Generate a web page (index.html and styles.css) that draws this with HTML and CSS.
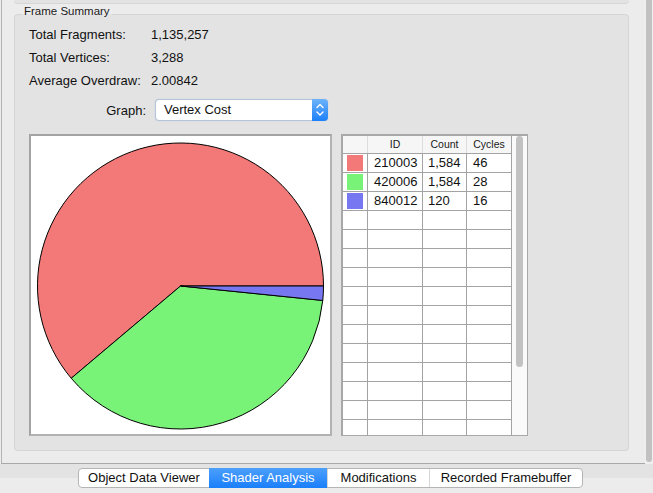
FILE: index.html
```html
<!DOCTYPE html>
<html>
<head>
<meta charset="utf-8">
<title>Frame Summary</title>
<link rel="stylesheet" href="styles.css">
</head>
<body>
<div class="top">
  <div class="pane">
    <div class="prev-group"></div>
    <fieldset class="group">
      <legend class="group-title">Frame Summary</legend>
      <div class="stats">
        <div class="stat-label">Total Fragments:</div><div class="stat-value">1,135,257</div>
        <div class="stat-label">Total Vertices:</div><div class="stat-value">3,288</div>
        <div class="stat-label">Average Overdraw:</div><div class="stat-value">2.00842</div>
      </div>
      <div class="graph-row">
        <div class="graph-label">Graph:</div>
        <div class="select">
          <span class="select-text">Vertex Cost</span>
          <span class="stepper">
            <svg width="16" height="22" viewBox="0 0 16 22">
              <path d="M5 8.5 L8 5.5 L11 8.5" fill="none" stroke="#fff" stroke-width="1.4" stroke-linecap="round" stroke-linejoin="round"/>
              <path d="M5 13 L8 16 L11 13" fill="none" stroke="#fff" stroke-width="1.4" stroke-linecap="round" stroke-linejoin="round"/>
            </svg>
          </span>
        </div>
      </div>
      <div class="chart-row">
        <div class="chart">
          <svg width="299" height="298" viewBox="0 0 299 298">
            <path d="M149.5 150 L292.5 150 A143 143 0 1 0 40.24 242.26 Z" fill="#f27977" stroke="#000" stroke-width="1"/>
            <path d="M149.5 150 L40.24 242.26 A143 143 0 0 0 291.77 164.46 Z" fill="#78f277" stroke="#000" stroke-width="1"/>
            <path d="M149.5 150 L291.77 164.46 A143 143 0 0 0 292.5 150 Z" fill="#7877f2" stroke="#000" stroke-width="1"/>
          </svg>
        </div>
        <div class="table">
          <div class="table-main">
            <div class="thead">
              <div class="th"></div>
              <div class="th">ID</div>
              <div class="th">Count</div>
              <div class="th">Cycles</div>
            </div>
            <div class="tbody">
              <div class="tr"><div class="td td-swatch"><span class="swatch swatch-red"></span></div><div class="td td-id">210003</div><div class="td td-count">1,584</div><div class="td td-cycles">46</div></div>
              <div class="tr"><div class="td td-swatch"><span class="swatch swatch-green"></span></div><div class="td td-id">420006</div><div class="td td-count">1,584</div><div class="td td-cycles">28</div></div>
              <div class="tr"><div class="td td-swatch"><span class="swatch swatch-blue"></span></div><div class="td td-id">840012</div><div class="td td-count">120</div><div class="td td-cycles">16</div></div>
              <div class="tr"><div class="td"></div><div class="td"></div><div class="td"></div><div class="td"></div></div>
              <div class="tr"><div class="td"></div><div class="td"></div><div class="td"></div><div class="td"></div></div>
              <div class="tr"><div class="td"></div><div class="td"></div><div class="td"></div><div class="td"></div></div>
              <div class="tr"><div class="td"></div><div class="td"></div><div class="td"></div><div class="td"></div></div>
              <div class="tr"><div class="td"></div><div class="td"></div><div class="td"></div><div class="td"></div></div>
              <div class="tr"><div class="td"></div><div class="td"></div><div class="td"></div><div class="td"></div></div>
              <div class="tr"><div class="td"></div><div class="td"></div><div class="td"></div><div class="td"></div></div>
              <div class="tr"><div class="td"></div><div class="td"></div><div class="td"></div><div class="td"></div></div>
              <div class="tr"><div class="td"></div><div class="td"></div><div class="td"></div><div class="td"></div></div>
              <div class="tr"><div class="td"></div><div class="td"></div><div class="td"></div><div class="td"></div></div>
              <div class="tr"><div class="td"></div><div class="td"></div><div class="td"></div><div class="td"></div></div>
              <div class="tr"><div class="td"></div><div class="td"></div><div class="td"></div><div class="td"></div></div>
            </div>
          </div>
          <div class="table-scroll"><div class="table-thumb"></div></div>
        </div>
      </div>
    </fieldset>
  </div>
  <div class="vscroll"><div class="vthumb"></div></div>
</div>
<div class="tabbar">
  <div class="tabs">
    <div class="tab tab-odv">Object Data Viewer</div>
    <div class="tab tab-sa tab-selected">Shader Analysis</div>
    <div class="tab tab-mod">Modifications</div>
    <div class="tab tab-rf">Recorded Framebuffer</div>
  </div>
</div>
</body>
</html>
```

FILE: styles.css
```css
* { box-sizing: border-box; }
html, body { margin: 0; padding: 0; }
body {
  width: 653px;
  height: 493px;
  overflow: hidden;
  background: #ececec;
  font-family: "Liberation Sans", Arial, Helvetica, sans-serif;
  font-size: 13px;
  color: #111;
}

.top { display: flex; height: 464px; }

.pane {
  margin-left: 1px;
  width: 644px;
  height: 464px;
  border-left: 1px solid #b3b3b3;
  border-bottom: 1px solid #a9a9a9;
  padding-left: 12px;
}

.prev-group {
  width: 615px;
  height: 4px;
  background: #e3e3e3;
  border-bottom: 1px solid #d6d6d6;
  border-radius: 0 0 4px 4px;
}

.group {
  margin: 0;
  width: 615px;
  min-width: 0;
  padding: 0 14px 14px 14px;
  border: 1px solid #d5d5d5;
  border-radius: 4px;
  background: #e3e3e3;
}

.group-title {
  font-size: 11.5px;
  line-height: 14px;
  padding: 0 2px 7px;
  margin-left: -7px;
  color: #1a1a1a;
}

.stats {
  display: grid;
  grid-template-columns: 122px auto;
  line-height: 23px;
  margin-top: -2px;
}

.graph-row {
  display: flex;
  align-items: center;
  height: 22px;
  margin-top: 7px;
}
.graph-label { width: 117px; text-align: right; }
.select {
  margin-left: 9px;
  width: 173px;
  height: 22px;
  display: flex;
  align-items: center;
  background: #fff;
  border: 1px solid #b4c4da;
  border-radius: 4px;
  box-shadow: 0 0 1px rgba(80, 130, 200, 0.35);
}
.select-text { padding-left: 8px; line-height: 20px; }
.stepper {
  margin: -1px -1px -1px auto;
  width: 16px;
  height: 22px;
  display: flex;
  border-radius: 0 4px 4px 0;
  background: linear-gradient(#6db3fb, #1c80fa);
}

.chart-row {
  display: flex;
  gap: 9px;
  margin-top: 13px;
}

.chart {
  width: 303px;
  height: 302px;
  background: #fff;
  border-style: solid;
  border-width: 2px;
  border-color: #a3a3a3 #b2b2b2 #b2b2b2 #a3a3a3;
}
.chart svg { display: block; }

.table {
  width: 187px;
  height: 302px;
  display: flex;
  background: #fff;
  border-style: solid;
  border-color: #a8a8a8;
  border-width: 2px 1px 1px 2px;
}
.table-main { width: 169px; height: 299px; overflow: hidden; }
.thead, .tr {
  display: grid;
  grid-template-columns: 25px 55px 44px 45px;
}
.thead {
  height: 18px;
  background: #f6f6f6;
  border-bottom: 1px solid #a3a3a3;
}
.th {
  font-size: 10.5px;
  line-height: 17px;
  text-align: center;
  color: #1a1a1a;
  border-right: 1px solid #dcdcdc;
}
.th:last-child { border-right-color: #a3a3a3; }
.tr { height: 19px; border-bottom: 1px solid #a3a3a3; }
.td {
  border-right: 1px solid #a3a3a3;
  line-height: 18px;
  font-size: 13px;
  white-space: nowrap;
}
.td-id { padding-left: 6px; }
.td-count { padding-left: 5px; }
.td-cycles { padding-left: 6px; }
.td-swatch { display: flex; align-items: center; padding-left: 4px; }
.swatch { display: block; width: 16px; height: 16px; }
.swatch-red { background: #f27977; }
.swatch-green { background: #78f277; }
.swatch-blue { background: #7877f2; }

.table-scroll {
  width: 15px;
  height: 299px;
  background: #fafafa;
  padding-left: 4px;
}
.table-thumb {
  width: 7px;
  height: 231px;
  background: #c2c2c2;
  border-radius: 4px;
}

.vscroll {
  width: 8px;
  height: 464px;
  background: #efefef;
  padding-left: 1px;
}
.vthumb {
  width: 6px;
  height: 462px;
  background: #c1c1c1;
  border-radius: 0 0 3px 3px;
}

.tabbar {
  height: 29px;
  padding-top: 4px;
  padding-left: 78px;
  background: linear-gradient(#e3e3e3 0, #e3e3e3 14px, #ececec 14px);
}
.tabs {
  display: flex;
  width: 505px;
  height: 20px;
  background: #fff;
  border: 1px solid #b5b5b5;
  border-radius: 4px;
}
.tab {
  height: 18px;
  line-height: 18px;
  text-align: center;
  font-size: 13px;
  color: #111;
  white-space: nowrap;
}
.tab-odv { width: 130px; }
.tab-sa { width: 118px; }
.tab-mod { width: 102px; border-left: 1px solid #d6d6d6; }
.tab-rf { width: 153px; border-left: 1px solid #d6d6d6; }
.tab-selected {
  margin: -1px 0;
  height: 20px;
  line-height: 20px;
  color: #fff;
  background: linear-gradient(#4da0fb, #1a7ffb);
}
```
